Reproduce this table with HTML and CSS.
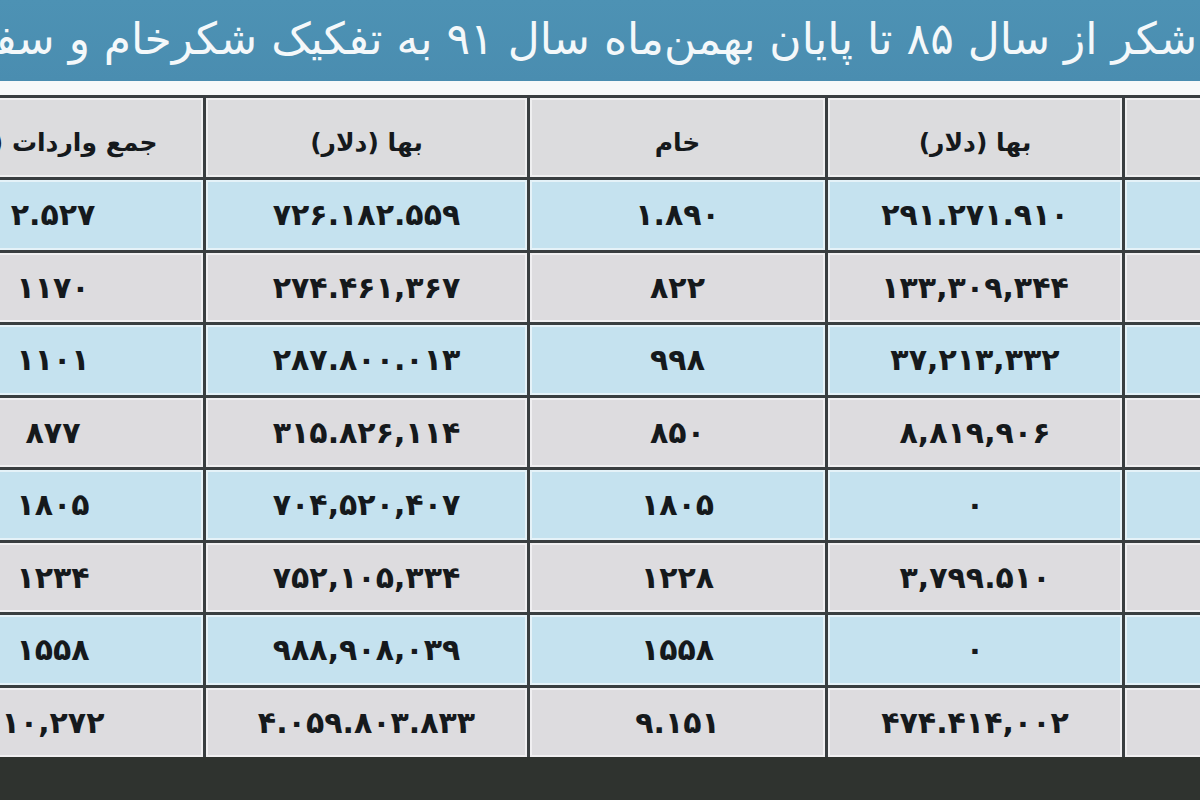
FILE: index.html
```html
<!DOCTYPE html>
<html lang="fa" dir="rtl">
<head>
<meta charset="utf-8">
<title>واردات شکر</title>
<link rel="stylesheet" href="styles.css">
</head>
<body>
<div class="page">
  <header class="title-bar">
    <h1 class="title">شکر از سال ۸۵ تا پایان بهمن‌ماه سال ۹۱ به تفکیک شکرخام و سفید</h1>
  </header>
  <div class="gap"></div>
  <div class="grid">
    <div class="cell head"></div>
    <div class="cell head">بها (دلار)</div>
    <div class="cell head">خام</div>
    <div class="cell head">بها (دلار)</div>
    <div class="cell head">جمع واردات (تن)</div>

    <div class="cell blue"></div>
    <div class="cell blue num">۲۹۱.۲۷۱.۹۱۰</div>
    <div class="cell blue num">۱.۸۹۰</div>
    <div class="cell blue num">۷۲۶.۱۸۲.۵۵۹</div>
    <div class="cell blue num">۲.۵۲۷</div>

    <div class="cell gray"></div>
    <div class="cell gray num">۱۳۳,۳۰۹,۳۴۴</div>
    <div class="cell gray num">۸۲۲</div>
    <div class="cell gray num">۲۷۴.۴۶۱,۳۶۷</div>
    <div class="cell gray num">۱۱۷۰</div>

    <div class="cell blue"></div>
    <div class="cell blue num">۳۷,۲۱۳,۳۳۲</div>
    <div class="cell blue num">۹۹۸</div>
    <div class="cell blue num">۲۸۷.۸۰۰.۰۱۳</div>
    <div class="cell blue num">۱۱۰۱</div>

    <div class="cell gray"></div>
    <div class="cell gray num">۸,۸۱۹,۹۰۶</div>
    <div class="cell gray num">۸۵۰</div>
    <div class="cell gray num">۳۱۵.۸۲۶,۱۱۴</div>
    <div class="cell gray num">۸۷۷</div>

    <div class="cell blue"></div>
    <div class="cell blue num">۰</div>
    <div class="cell blue num">۱۸۰۵</div>
    <div class="cell blue num">۷۰۴,۵۲۰,۴۰۷</div>
    <div class="cell blue num">۱۸۰۵</div>

    <div class="cell gray"></div>
    <div class="cell gray num">۳,۷۹۹.۵۱۰</div>
    <div class="cell gray num">۱۲۲۸</div>
    <div class="cell gray num">۷۵۲,۱۰۵,۳۳۴</div>
    <div class="cell gray num">۱۲۳۴</div>

    <div class="cell blue"></div>
    <div class="cell blue num">۰</div>
    <div class="cell blue num">۱۵۵۸</div>
    <div class="cell blue num">۹۸۸,۹۰۸,۰۳۹</div>
    <div class="cell blue num">۱۵۵۸</div>

    <div class="cell gray"></div>
    <div class="cell gray num">۴۷۴.۴۱۴,۰۰۲</div>
    <div class="cell gray num">۹.۱۵۱</div>
    <div class="cell gray num">۴.۰۵۹.۸۰۳.۸۳۳</div>
    <div class="cell gray num">۱۰,۲۷۲</div>
  </div>
  <footer class="bottom-bar"></footer>
</div>
</body>
</html>
```

FILE: styles.css
```css
html, body {
  margin: 0;
  padding: 0;
  width: 1200px;
  height: 800px;
  overflow: hidden;
  background: #2f332f;
}

.page {
  width: 1200px;
  height: 800px;
  overflow: hidden;
  display: flex;
  flex-direction: column;
  font-family: "DejaVu Sans", sans-serif;
}

.title-bar {
  height: 81px;
  flex: none;
  background: linear-gradient(#4d92b4, #4a8db0);
  display: flex;
  align-items: center;
  overflow: hidden;
}

.title {
  margin: 0;
  padding-right: 3px;
  padding-bottom: 4px;
  white-space: nowrap;
  color: #f4f8fa;
  font-size: 44px;
  font-weight: normal;
  line-height: 1;
}

.gap {
  height: 14px;
  flex: none;
  background: #f7f9f9;
}

.grid {
  flex: none;
  width: 1422px;
  margin-right: -125px;
  display: grid;
  grid-template-columns: 200px 294px 295px 321px 300px;
  grid-template-rows: 79px repeat(8, 69.5px);
  gap: 3px;
  padding-top: 3px;
  background: #393e40;
}

.cell {
  display: flex;
  align-items: center;
  justify-content: center;
  box-shadow: inset 0 0 0 2px rgba(255, 255, 255, 0.55);
  color: #15191c;
  font-weight: bold;
  white-space: nowrap;
}

.head {
  background: #dcdcde;
  font-size: 25px;
  padding-top: 10px;
  box-sizing: border-box;
}

.blue {
  background: #c5e2ef;
}

.gray {
  background: #dddcdf;
}

.num {
  font-size: 30px;
  letter-spacing: -0.5px;
}

.bottom-bar {
  flex: 1;
  background: #2f332f;
}
```
